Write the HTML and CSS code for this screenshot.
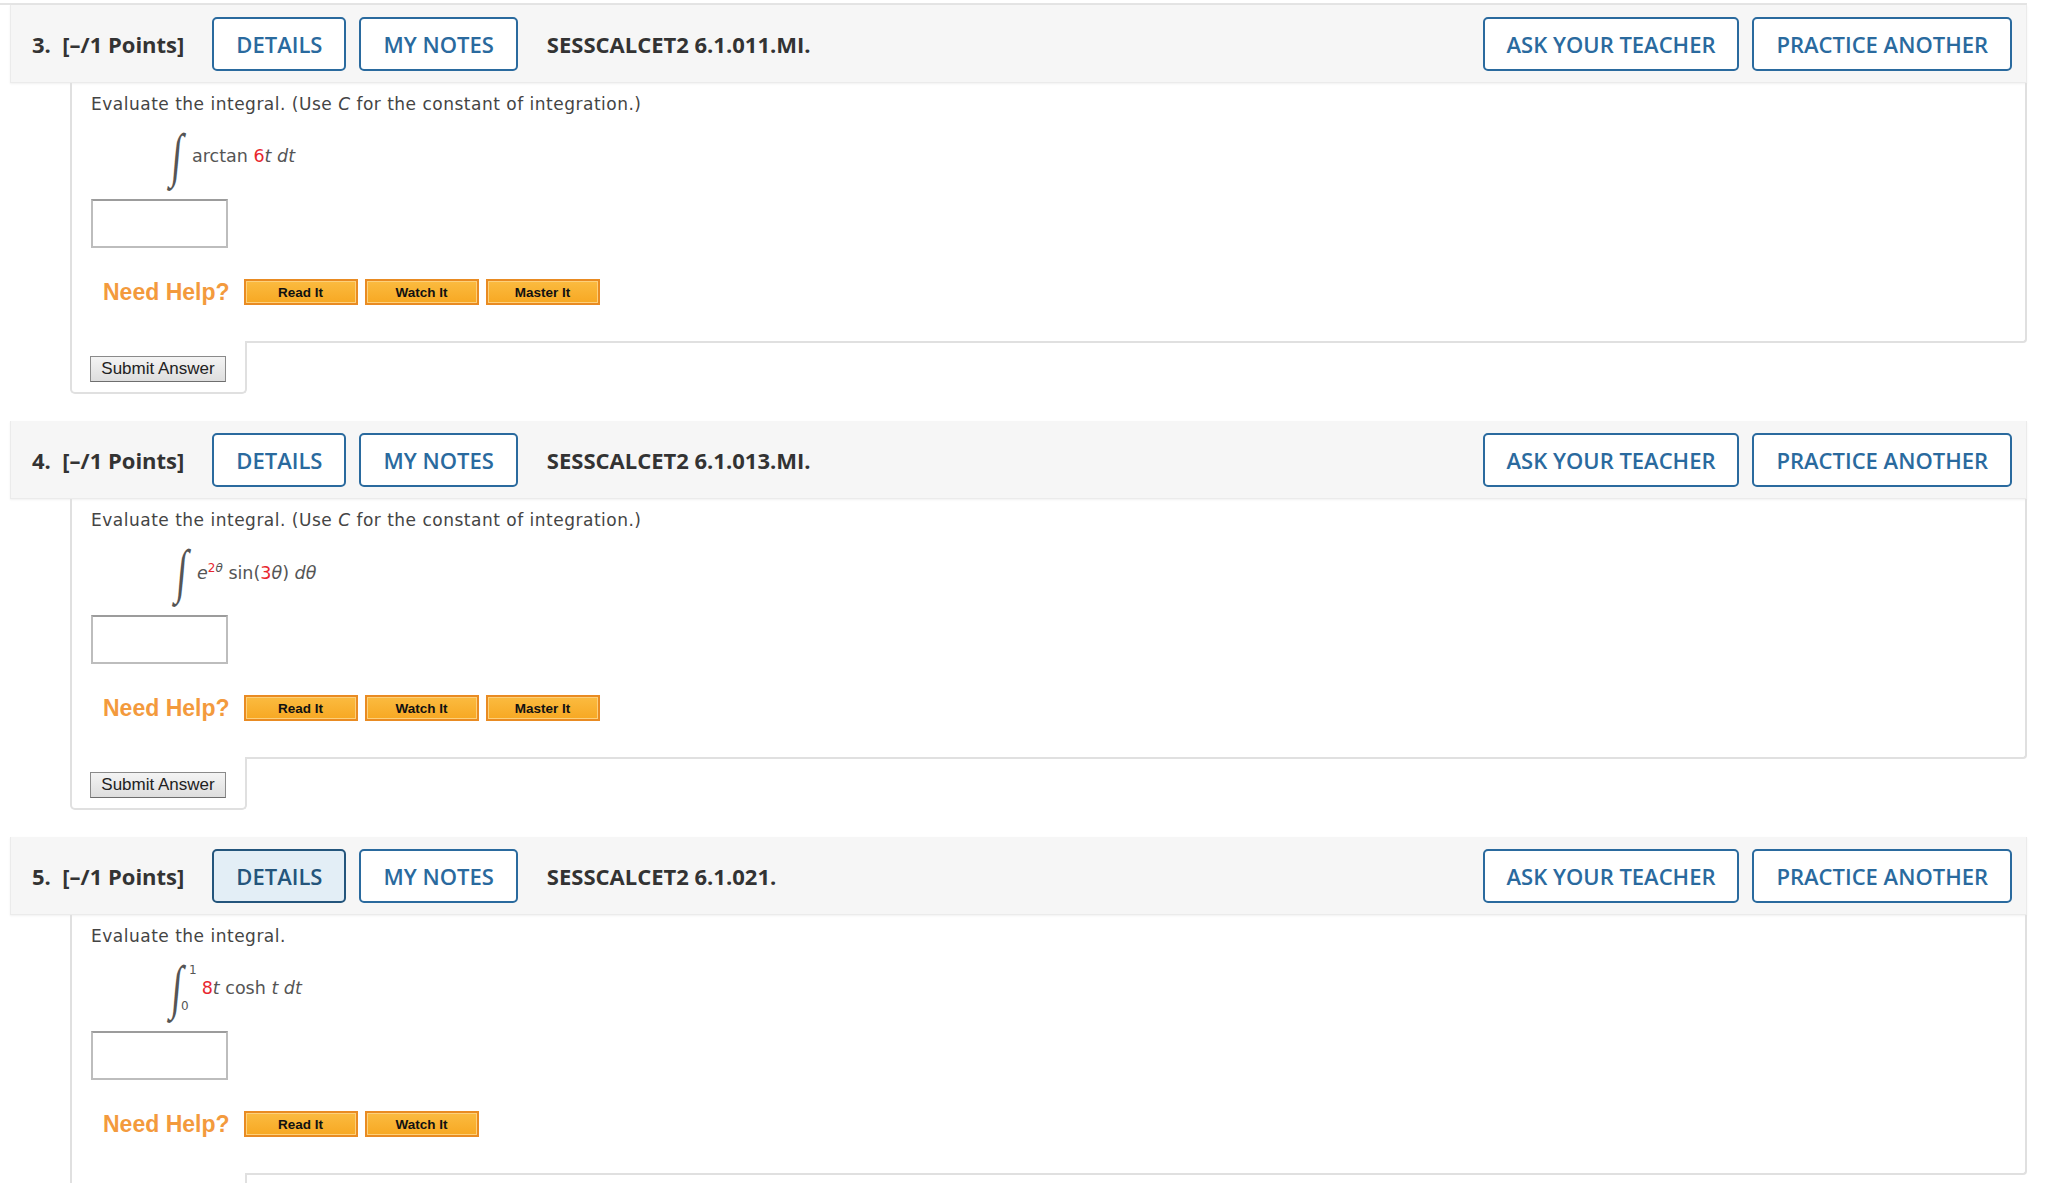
FILE: index.html
```html
<!DOCTYPE html>
<html lang="en">
<head>
    <meta charset="UTF-8">
    <title>Assignment - Questions</title>
    <link rel="stylesheet" href="styles.css">
</head>
<body>
    <div class="page">
        <div class="prev-end"></div>

        <!-- Question 3 -->
        <section class="question">
            <div class="q-head">
                <span class="q-num">3.&nbsp; [–/1 Points]</span>
                <button class="hbtn">DETAILS</button>
                <button class="hbtn">MY NOTES</button>
                <span class="q-code">SESSCALCET2 6.1.011.MI.</span>
                <span class="spacer"></span>
                <button class="hbtn">ASK YOUR TEACHER</button>
                <button class="hbtn">PRACTICE ANOTHER</button>
            </div>
            <div class="q-body">
                <p class="prompt">Evaluate the integral. (Use <i>C</i> for the constant of integration.)</p>
                <div class="math">
                    <span class="int">∫</span>
                    <span class="expr">arctan <span class="red">6</span><i>t</i> <i>dt</i></span>
                </div>
                <input class="answer" type="text">
                <div class="help">
                    <span class="help-label">Need Help?</span>
                    <button class="help-btn">Read It</button>
                    <button class="help-btn">Watch It</button>
                    <button class="help-btn">Master It</button>
                </div>
            </div>
            <div class="q-foot">
                <button class="submit">Submit Answer</button>
            </div>
        </section>

        <!-- Question 4 -->
        <section class="question">
            <div class="q-head">
                <span class="q-num">4.&nbsp; [–/1 Points]</span>
                <button class="hbtn">DETAILS</button>
                <button class="hbtn">MY NOTES</button>
                <span class="q-code">SESSCALCET2 6.1.013.MI.</span>
                <span class="spacer"></span>
                <button class="hbtn">ASK YOUR TEACHER</button>
                <button class="hbtn">PRACTICE ANOTHER</button>
            </div>
            <div class="q-body">
                <p class="prompt">Evaluate the integral. (Use <i>C</i> for the constant of integration.)</p>
                <div class="math shifted">
                    <span class="int">∫</span>
                    <span class="expr"><i>e</i><sup><span class="red">2</span><i>θ</i></sup> sin(<span class="red">3</span><i>θ</i>) <i>dθ</i></span>
                </div>
                <input class="answer" type="text">
                <div class="help">
                    <span class="help-label">Need Help?</span>
                    <button class="help-btn">Read It</button>
                    <button class="help-btn">Watch It</button>
                    <button class="help-btn">Master It</button>
                </div>
            </div>
            <div class="q-foot">
                <button class="submit">Submit Answer</button>
            </div>
        </section>

        <!-- Question 5 -->
        <section class="question">
            <div class="q-head">
                <span class="q-num">5.&nbsp; [–/1 Points]</span>
                <button class="hbtn active">DETAILS</button>
                <button class="hbtn">MY NOTES</button>
                <span class="q-code">SESSCALCET2 6.1.021.</span>
                <span class="spacer"></span>
                <button class="hbtn">ASK YOUR TEACHER</button>
                <button class="hbtn">PRACTICE ANOTHER</button>
            </div>
            <div class="q-body">
                <p class="prompt">Evaluate the integral.</p>
                <div class="math">
                    <span class="int">∫</span>
                    <span class="limits"><span class="lim">1</span><span class="lim">0</span></span>
                    <span class="expr"><span class="red">8</span><i>t</i> cosh <i>t</i> <i>dt</i></span>
                </div>
                <input class="answer" type="text">
                <div class="help">
                    <span class="help-label">Need Help?</span>
                    <button class="help-btn">Read It</button>
                    <button class="help-btn">Watch It</button>
                </div>
            </div>
            <div class="q-foot">
                <button class="submit">Submit Answer</button>
            </div>
        </section>
    </div>
</body>
</html>
```

FILE: styles.css
```css
:root {
    --blue: #2a6a9e;
    --head-bg: #f6f6f6;
    --line: #e0e0e0;
    --orange: #f39a3d;
    --text: #3a3a3a;
    --math: #555555;
    --red: #e8262e;
}

body {
    margin: 0;
    background: #ffffff;
    font-family: "Open Sans", Arial, sans-serif;
    color: var(--text);
    overflow: hidden;
}

.page {
    padding-right: 20px;
}

.prev-end {
    height: 3px;
    border-bottom: 2px solid #e4e4e4;
}

.question {
    margin-bottom: 25px;
}

/* header band */
.q-head {
    margin-left: 10px;
    height: 78px;
    box-sizing: border-box;
    padding: 0 14px 0 21px;
    display: flex;
    align-items: center;
    background: var(--head-bg);
    border: 1px solid #ebebeb;
    border-top: none;
    box-shadow: 0 1px 2px rgba(0, 0, 0, 0.06);
}

.q-num {
    font-size: 22px;
    font-weight: 700;
    color: #333;
    margin-right: 28px;
    white-space: pre;
}

.q-code {
    font-size: 22px;
    font-weight: 700;
    color: #333;
    margin-left: 16px;
}

.spacer {
    flex: 1;
}

.hbtn {
    height: 54px;
    padding: 0 22px;
    margin-right: 13px;
    background: #ffffff;
    border: 2px solid var(--blue);
    border-radius: 5px;
    color: var(--blue);
    font-family: "Open Sans", Arial, sans-serif;
    font-size: 22px;
    font-weight: 600;
    cursor: pointer;
}

.hbtn:last-child {
    margin-right: 0;
}

.hbtn.active {
    background: #e3eef6;
    border-color: #24557c;
    color: #24557c;
}

/* question body */
.q-body {
    margin-left: 70px;
    padding: 10px 20px 34px 19px;
    border: 2px solid var(--line);
    border-top: none;
    border-bottom-right-radius: 4px;
}

.prompt {
    margin: 0;
    font-family: "DejaVu Sans", Verdana, sans-serif;
    font-size: 17px;
    letter-spacing: 0.5px;
    line-height: 22px;
    color: #444;
}

.math {
    display: flex;
    align-items: center;
    height: 60px;
    margin: 11px 0 13px 80px;
    color: var(--math);
}

.math.shifted {
    margin-left: 85px;
}

.int {
    font-family: "Liberation Serif", serif;
    font-size: 44px;
    line-height: 1;
    transform: scale(0.85, 1.35) skewX(-8deg);
    display: inline-block;
    margin-right: 9px;
}

.limits {
    display: flex;
    flex-direction: column;
    justify-content: space-between;
    height: 50px;
    font-family: "DejaVu Sans", Verdana, sans-serif;
    font-size: 12px;
    margin: 0 5px 0 -11px;
}

.lim:first-child {
    margin-left: 8px;
}

.expr {
    font-family: "DejaVu Sans", Verdana, sans-serif;
    font-size: 17.5px;
}

.expr sup {
    font-size: 12px;
}

.red {
    color: var(--red);
}

.answer {
    display: block;
    width: 137px;
    height: 49px;
    box-sizing: border-box;
    margin: 0;
    border: 2px solid #bdbdbd;
    border-top-color: #9c9c9c;
    background: #fff;
}

.help {
    display: flex;
    align-items: center;
    gap: 7px;
    height: 30px;
    margin-top: 29px;
    padding-left: 12px;
}

.help-label {
    font-family: "Liberation Sans", Arial, sans-serif;
    font-size: 23px;
    font-weight: 700;
    color: var(--orange);
    margin-right: 7px;
}

.help-btn {
    width: 114px;
    height: 26px;
    padding: 0;
    background: linear-gradient(#fbbb40, #f7a823);
    border: 2px solid #e98b22;
    box-shadow: inset 0 0 0 1px #fdd07a;
    font-family: "Liberation Sans", Arial, sans-serif;
    font-size: 13.5px;
    font-weight: 700;
    color: #111;
    cursor: pointer;
}

/* submit tab hanging under the body */
.q-foot {
    position: relative;
    top: -2px;
    margin-left: 70px;
    width: 177px;
    height: 53px;
    box-sizing: border-box;
    padding: 15px 0 0 18px;
    background: #fff;
    border: 2px solid var(--line);
    border-top: none;
    border-radius: 0 0 5px 5px;
}

.submit {
    width: 136px;
    height: 26px;
    padding: 0;
    background: linear-gradient(#f4f4f4, #dedede);
    border: 1px solid #8a8a8a;
    border-bottom-color: #6e6e6e;
    font-family: "Liberation Sans", Arial, sans-serif;
    font-size: 17px;
    color: #222;
    cursor: pointer;
}
```
